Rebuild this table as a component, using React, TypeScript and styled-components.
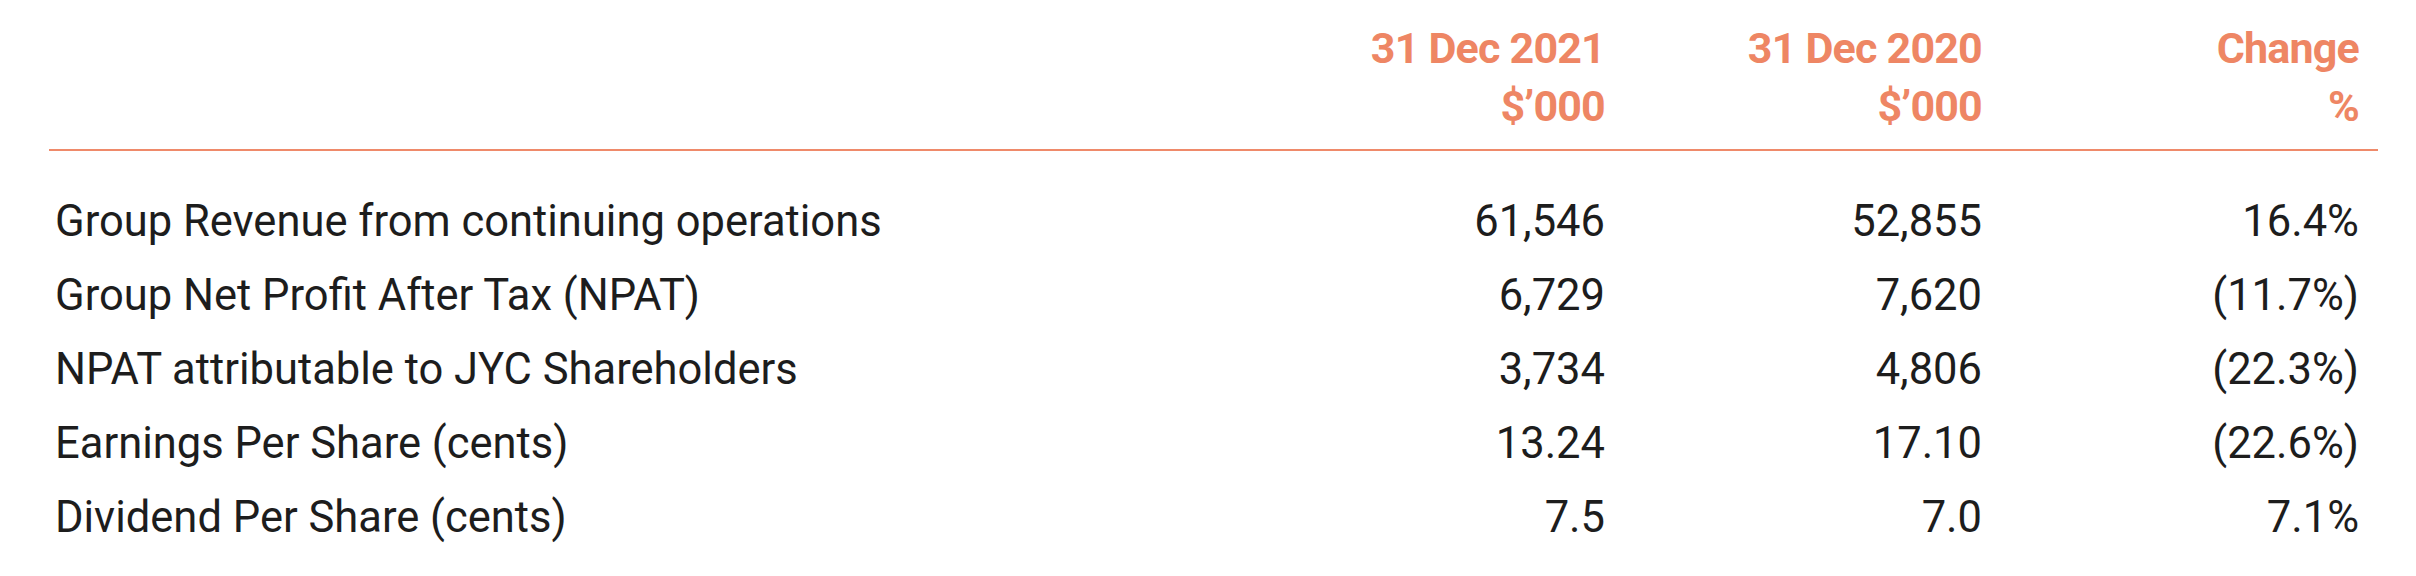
import React from 'react';
import styled, { createGlobalStyle } from 'styled-components';

const GlobalStyle = createGlobalStyle`
  html, body {
    margin: 0;
    padding: 0;
    background: #ffffff;
  }
  body {
    font-family: Roboto, "Liberation Sans", Arial, sans-serif;
  }
`;

interface IRow {
  label: string
  current: string
  previous: string
  change: string
}

const rows: IRow[] = [
  { label: 'Group Revenue from continuing operations', current: '61,546', previous: '52,855', change: '16.4%' },
  { label: 'Group Net Profit After Tax (NPAT)', current: '6,729', previous: '7,620', change: '(11.7%)' },
  { label: 'NPAT attributable to JYC Shareholders', current: '3,734', previous: '4,806', change: '(22.3%)' },
  { label: 'Earnings Per Share (cents)', current: '13.24', previous: '17.10', change: '(22.6%)' },
  { label: 'Dividend Per Share (cents)', current: '7.5', previous: '7.0', change: '7.1%' },
];

const App = () => {
  return (
    <>
      <GlobalStyle />
      <StyledWrap>
        <StyledTable>
          <thead>
            <tr>
              <StyledHeadCell />
              <StyledHeadCell $numeric>31 Dec 2021<br />$’000</StyledHeadCell>
              <StyledHeadCell $numeric>31 Dec 2020<br />$’000</StyledHeadCell>
              <StyledHeadCell $numeric>Change<br />%</StyledHeadCell>
            </tr>
          </thead>
          <tbody>
            {rows.map((row, i) => (
              <tr key={row.label}>
                <StyledCell $first={i === 0}>{row.label}</StyledCell>
                <StyledCell $numeric $first={i === 0}>{row.current}</StyledCell>
                <StyledCell $numeric $first={i === 0}>{row.previous}</StyledCell>
                <StyledCell $numeric $first={i === 0}>{row.change}</StyledCell>
              </tr>
            ))}
          </tbody>
        </StyledTable>
      </StyledWrap>
    </>
  );
};

export default App;

const StyledWrap = styled.div`
  padding: 19px 38px 0 49px;
`;

const StyledTable = styled.table`
  width: 2329px;
  border-collapse: collapse;
  table-layout: fixed;
`;

const StyledHeadCell = styled.th<{ $numeric?: boolean }>`
  padding: 0 ${({ $numeric }) => ($numeric ? '19px' : '0')} 14px 0;
  width: ${({ $numeric }) => ($numeric ? '377px' : 'auto')};
  box-sizing: border-box;
  text-align: right;
  vertical-align: bottom;
  font-size: 43px;
  font-weight: 700;
  letter-spacing: -0.8px;
  line-height: 58px;
  color: #ee8664;
  border-bottom: 2px solid #ef8a6a;
`;

const StyledCell = styled.td<{ $numeric?: boolean, $first?: boolean }>`
  padding: ${({ $first }) => ($first ? '34px' : '0')} ${({ $numeric }) => ($numeric ? '19px' : '0')} 0 ${({ $numeric }) => ($numeric ? '0' : '6px')};
  text-align: ${({ $numeric }) => ($numeric ? 'right' : 'left')};
  font-size: 43.5px;
  font-weight: 400;
  line-height: 74px;
  color: #1d1d1d;
  white-space: nowrap;
`;
